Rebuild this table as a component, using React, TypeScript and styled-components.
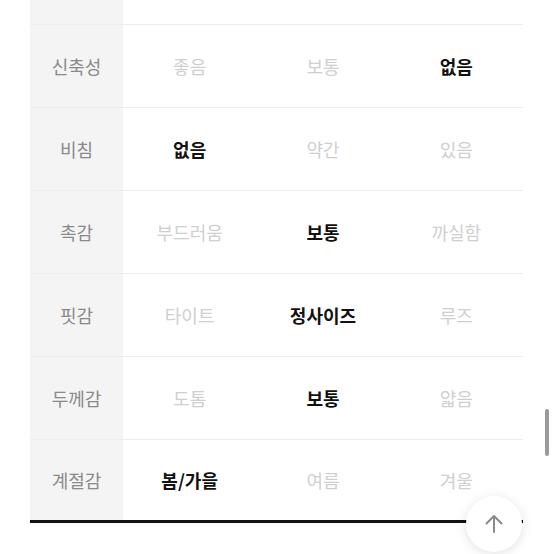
import styled, { createGlobalStyle } from "styled-components";

const GlobalStyle = createGlobalStyle`
  html, body {
    margin: 0;
    padding: 0;
    background: #fff;
    font-family: "Noto Sans CJK KR", "Noto Sans", sans-serif;
    overflow: hidden;
  }
`;

type Row = {
  label: string;
  options: string[];
  selected: number;
};

const rows: Row[] = [
  { label: "신축성", options: ["좋음", "보통", "없음"], selected: 2 },
  { label: "비침", options: ["없음", "약간", "있음"], selected: 0 },
  { label: "촉감", options: ["부드러움", "보통", "까실함"], selected: 1 },
  { label: "핏감", options: ["타이트", "정사이즈", "루즈"], selected: 1 },
  { label: "두께감", options: ["도톰", "보통", "얇음"], selected: 1 },
  { label: "계절감", options: ["봄/가을", "여름", "겨울"], selected: 0 },
];

function App() {
  return (
    <Page>
      <GlobalStyle />
      <Table>
        <TopRow>
          <LabelCell />
        </TopRow>
        {rows.map((row) => (
          <TableRow key={row.label}>
            <LabelCell>{row.label}</LabelCell>
            {row.options.map((opt, i) => (
              <OptionCell key={opt} $active={i === row.selected}>
                {opt}
              </OptionCell>
            ))}
          </TableRow>
        ))}
      </Table>
      <ScrollThumb />
      <TopButton aria-label="맨 위로">
        <svg width="24" height="24" viewBox="0 0 24 24" fill="none">
          <path
            d="M12 20V4M4.5 11.5L12 4l7.5 7.5"
            stroke="#8a8a8a"
            strokeWidth="2"
            strokeLinecap="round"
            strokeLinejoin="round"
          />
        </svg>
      </TopButton>
    </Page>
  );
}

const Page = styled.div`
  position: relative;
  width: 554px;
  height: 554px;
  overflow: hidden;
`;

const Table = styled.div`
  margin-left: 30px;
  width: 493px;
  border-bottom: 3px solid #111;
`;

const TableRow = styled.div`
  display: grid;
  grid-template-columns: 93px repeat(3, 1fr);
  height: 82px;
  border-bottom: 1px solid #ededed;
  align-items: stretch;

  &:last-child {
    border-bottom: none;
    height: 80px;
  }
`;

const TopRow = styled(TableRow)`
  height: 24px;
`;

const LabelCell = styled.div`
  background: #f4f4f4;
  display: flex;
  align-items: center;
  justify-content: center;
  font-size: 18px;
  color: #8a8a8a;
`;

const OptionCell = styled.div<{ $active: boolean }>`
  display: flex;
  align-items: center;
  justify-content: center;
  font-size: 18px;
  color: ${({ $active }) => ($active ? "#111" : "#cfcfcf")};
  font-weight: ${({ $active }) => ($active ? 700 : 400)};
`;

const ScrollThumb = styled.div`
  position: absolute;
  right: 5px;
  top: 409px;
  width: 4px;
  height: 47px;
  border-radius: 2px;
  background: #9a9a9a;
`;

const TopButton = styled.button`
  position: absolute;
  left: 466px;
  top: 496px;
  width: 56px;
  height: 56px;
  border-radius: 50%;
  border: none;
  background: #fff;
  box-shadow: 0 2px 12px rgba(0, 0, 0, 0.12);
  display: flex;
  align-items: center;
  justify-content: center;
  padding: 0;
`;

export default App;
